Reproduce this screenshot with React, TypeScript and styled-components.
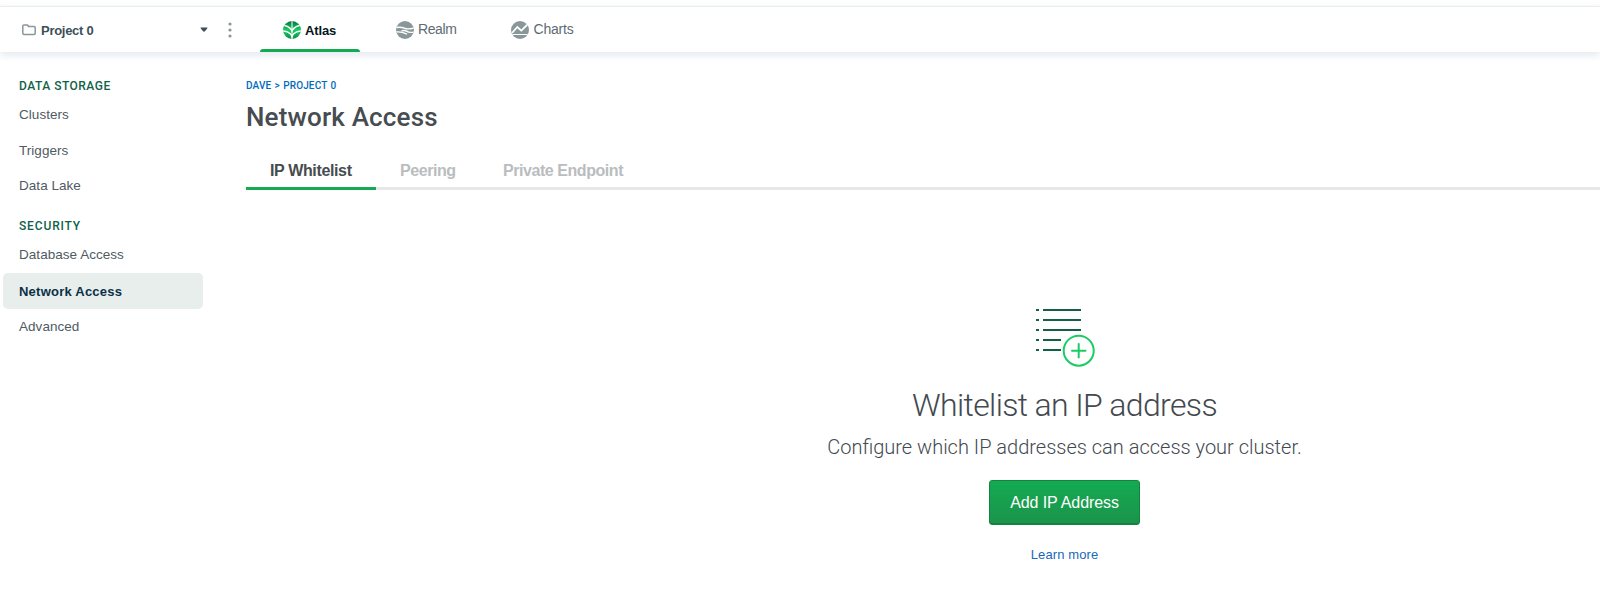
import React from "react";
import styled, { createGlobalStyle, css } from "styled-components";

const GlobalStyle = createGlobalStyle`
  * { box-sizing: border-box; }
  body {
    margin: 0;
    background: #fff;
    color: #494747;
    font-family: "Liberation Sans", Arial, sans-serif;
  }
  a { text-decoration: none; }
`;

const Page = styled.div`
  height: 611px;
  overflow: hidden;
  display: flex;
  flex-direction: column;
  background: #fff;
`;

const TopBar = styled.header`
  flex: none;
  height: 46px;
  margin-top: 6px;
  display: flex;
  border-top: 1px solid #e7eeec;
  box-shadow: 0 3px 8px rgba(20, 60, 120, 0.12);
`;

const ProjectPicker = styled.div`
  width: 260px;
  display: flex;
  align-items: center;
  padding-left: 22px;
`;

const ProjectName = styled.span`
  margin-left: 5px;
  width: 158px;
  padding-top: 2px;
  font: 700 13px/16px "Liberation Sans", Arial, sans-serif;
  letter-spacing: -0.28px;
  color: #3d4f58;
`;

const Caret = styled.svg`
  margin-right: 19px;
`;

const ProductTab = styled.a<{ $active?: boolean; $spacing: number }>`
  display: flex;
  align-items: center;
  gap: 4px;
  margin-right: 9px;
  padding: 0 23px;
  font-size: 14px;
  line-height: 16px;
  letter-spacing: ${(p) => p.$spacing}px;
  color: #5d6c74;
  span { padding-bottom: 1px; }
  ${(p) =>
    p.$active &&
    css`
      position: relative;
      width: 100px;
      margin-right: 13px;
      font-size: 13px;
      font-weight: 700;
      color: #061621;
      span { padding: 2px 0 0; }
      &::after {
        content: "";
        position: absolute;
        left: 0;
        right: 0;
        bottom: 0;
        height: 3px;
        border-radius: 3px 3px 0 0;
        background: #13aa52;
      }
    `}
`;

const Body = styled.div`
  flex: 1;
  display: flex;
  min-height: 0;
`;

const Sidebar = styled.nav`
  flex: none;
  width: 246px;
  padding: 26px 43px 0 3px;
`;

const SideGroup = styled.section`
  margin-bottom: 14px;
`;

const SideHeading = styled.h2<{ $spacing: number }>`
  margin: 0 0 2px;
  padding-left: 16px;
  font: 500 12px/17px Roboto, sans-serif;
  letter-spacing: ${(p) => p.$spacing}px;
  color: #116149;
`;

const SideItem = styled.a<{ $active?: boolean }>`
  display: flex;
  align-items: center;
  height: 35.5px;
  padding-left: 16px;
  font-size: 13.5px;
  letter-spacing: 0.04px;
  color: #4f5b62;
  ${(p) =>
    p.$active &&
    css`
      height: 36px;
      margin-top: 1px;
      border-radius: 5px;
      background: #e7eeec;
      font-size: 13px;
      font-weight: 700;
      letter-spacing: 0.23px;
      color: #0b3048;
      padding-top: 1px;
    `}
`;

const Main = styled.main`
  flex: 1;
  display: flex;
  flex-direction: column;
`;

const Breadcrumb = styled.div`
  margin-top: 27px;
  font: 500 10px/14px Roboto, sans-serif;
  letter-spacing: 0.13px;
  word-spacing: 0.7px;
  color: #006cbc;
`;

const Title = styled.h1`
  margin: 8px 0 0;
  font: 500 26px/32px Roboto, sans-serif;
  letter-spacing: 0.17px;
  color: #464c4f;
`;

const Tabs = styled.div`
  display: flex;
  height: 43px;
  margin-top: 14px;
  padding-top: 9px;
  box-shadow: inset 0 -3px #e7e7e7;
`;

const Tab = styled.a<{ $active?: boolean; $width: number }>`
  width: ${(p) => p.$width}px;
  display: flex;
  align-items: center;
  padding: 0 0 2px 24px;
  border-bottom: 3px solid ${(p) => (p.$active ? "#13aa52" : "transparent")};
  color: ${(p) => (p.$active ? "#464c4f" : "#b9bdbe")};
  font: 700 16px/20px "Liberation Sans", Arial, sans-serif;
  letter-spacing: ${(p) => (p.$active ? -0.36 : -0.44)}px;
  white-space: nowrap;
`;

const Empty = styled.section`
  width: 1637px;
  display: flex;
  flex-direction: column;
  align-items: center;
  padding-top: 118px;
`;

const EmptyTitle = styled.h2`
  margin: 13px 0 0;
  font: 300 32px/48px Roboto, sans-serif;
  letter-spacing: -0.64px;
  color: #42494f;
`;

const EmptyText = styled.p`
  margin: 4px 0 0;
  font: 300 20px/28px Roboto, sans-serif;
  color: #42494f;
`;

const AddButton = styled.button`
  width: 151px;
  height: 45px;
  margin: 19px 0 0;
  padding: 0;
  border: 1px solid #158242;
  border-radius: 3px;
  background: linear-gradient(#13aa52, #1b944a);
  box-shadow: inset 0 -1px #158242;
  color: #fff;
  font: 400 16px/20px "Liberation Sans", Arial, sans-serif;
  letter-spacing: -0.1px;
  white-space: nowrap;
`;

const LearnMore = styled.a`
  margin-top: 21px;
  font-size: 13px;
  line-height: 18px;
  letter-spacing: 0.1px;
  color: #1a69b8;
`;

const FolderIcon = () => (
  <svg width="14" height="12" viewBox="0 0 14 12" fill="none" stroke="#89979b" strokeWidth="1.5">
    <path d="M.8 2Q.8.9 1.9.9h3.2q.7 0 1 .7l.3.8h5.6q1.2 0 1.2 1.2v5.6q0 1.2-1.2 1.2H2Q.8 10.4.8 9.2Z" />
  </svg>
);

const AtlasIcon = () => (
  <svg width="18" height="18" viewBox="0 0 18 18">
    <defs>
      <linearGradient id="leaf" x1="0" y1="0" x2="0" y2="1">
        <stop offset="0" stopColor="#0b7046" />
        <stop offset=".5" stopColor="#13cf5f" />
        <stop offset="1" stopColor="#128c4a" />
      </linearGradient>
      <clipPath id="atlasDisc">
        <circle cx="9" cy="9" r="9" />
      </clipPath>
    </defs>
    <g clipPath="url(#atlasDisc)">
      <rect width="18" height="18" fill="url(#leaf)" />
      <g fill="none" stroke="#fff" strokeWidth="1.6">
        <path d="M9 0v18" strokeWidth="1" />
        <path d="M.5 4.200Q5 5 7 7.200 8.500 8.500 9 9.800 9.500 8.500 11 7.200 13 5 17.500 4.200" />
        <path d="M-.5 10Q4.500 10.300 7 12.500 8.500 13.800 9 15.500 9.500 13.800 11 12.500 13.500 10.300 18.500 10" />
      </g>
    </g>
  </svg>
);

const RealmIcon = () => (
  <svg width="18" height="18" viewBox="0 0 18 18">
    <clipPath id="realmDisc">
      <circle cx="9" cy="9" r="9" />
    </clipPath>
    <g clipPath="url(#realmDisc)">
      <rect width="18" height="18" fill="#89979b" />
      <g fill="none" stroke="#fff" strokeWidth="1.4">
        <path d="M-1 6.800C4 5.500 6 6.200 9 7.400s5 .6 9.500-.6" />
        <path d="M5.500 9.900Q9 8.800 11 10.400t7.500 .6" />
        <path d="M-1 11.200C3 10.200 6 10.800 11 13.200" />
      </g>
    </g>
  </svg>
);

const ChartsIcon = () => (
  <svg width="18" height="18" viewBox="0 0 18 18">
    <clipPath id="chartsDisc">
      <circle cx="9" cy="9" r="9" />
    </clipPath>
    <g clipPath="url(#chartsDisc)">
      <rect width="18" height="18" fill="#89979b" />
      <path d="M1 12 6.300 6l4 3.600L16.500 3.500" fill="none" stroke="#fff" strokeWidth="1.8" />
      <path d="M0 13.500h18" stroke="#fff" strokeWidth="1" />
    </g>
  </svg>
);

const ListPlusIcon = () => (
  <svg width="60" height="60" viewBox="0 0 60 60">
    <g fill="#116149">
      {[1, 11, 21, 31, 41].map((y) => (
        <React.Fragment key={y}>
          <rect x="1" y={y} width="3" height="2" />
          <rect x="8" y={y} width={y > 21 ? 18 : 38} height="2" />
        </React.Fragment>
      ))}
    </g>
    <g fill="none" stroke="#1bcb65" strokeWidth="2">
      <circle cx="43.700" cy="42.700" r="15" />
      <path d="M37 42.700h13.500M43.700 36v13.500" strokeLinecap="round" />
    </g>
  </svg>
);

export default function App() {
  return (
    <Page>
      <GlobalStyle />
      <TopBar>
        <ProjectPicker>
          <FolderIcon />
          <ProjectName>Project 0</ProjectName>
          <Caret width="10" height="6" viewBox="0 0 10 6">
            <path d="M1.500.5h7Q8.500 1.500 5 5 1.500 1.500 1.500.5" fill="#3d4f58" />
          </Caret>
          <svg width="4" height="16" viewBox="0 0 4 16" fill="#89979b">
            <circle cx="2" cy="2" r="1.600" />
            <circle cx="2" cy="8" r="1.600" />
            <circle cx="2" cy="14" r="1.600" />
          </svg>
        </ProjectPicker>
        <ProductTab $active $spacing={-0.15}>
          <AtlasIcon />
          <span>Atlas</span>
        </ProductTab>
        <ProductTab $spacing={-0.4}>
          <RealmIcon />
          <span>Realm</span>
        </ProductTab>
        <ProductTab $spacing={-0.2}>
          <ChartsIcon />
          <span>Charts</span>
        </ProductTab>
      </TopBar>
      <Body>
        <Sidebar>
          <SideGroup>
            <SideHeading $spacing={0.5}>DATA STORAGE</SideHeading>
            <SideItem>Clusters</SideItem>
            <SideItem>Triggers</SideItem>
            <SideItem>Data Lake</SideItem>
          </SideGroup>
          <SideGroup>
            <SideHeading $spacing={0.85}>SECURITY</SideHeading>
            <SideItem>Database Access</SideItem>
            <SideItem $active>Network Access</SideItem>
            <SideItem>Advanced</SideItem>
          </SideGroup>
        </Sidebar>
        <Main>
          <Breadcrumb>DAVE &gt; PROJECT 0</Breadcrumb>
          <Title>Network Access</Title>
          <Tabs>
            <Tab $active $width={130}>IP Whitelist</Tab>
            <Tab $width={103}>Peering</Tab>
            <Tab $width={170}>Private Endpoint</Tab>
          </Tabs>
          <Empty>
            <ListPlusIcon />
            <EmptyTitle>Whitelist an IP address</EmptyTitle>
            <EmptyText>Configure which IP addresses can access your cluster.</EmptyText>
            <AddButton>Add IP Address</AddButton>
            <LearnMore>Learn more</LearnMore>
          </Empty>
        </Main>
      </Body>
    </Page>
  );
}
